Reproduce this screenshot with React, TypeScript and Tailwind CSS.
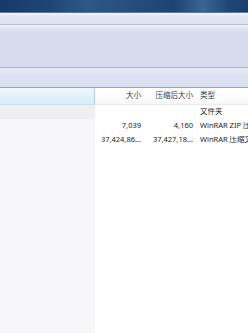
const font = "font-['Noto_Sans','Noto_Sans_CJK_SC',sans-serif]";

interface Row {
  size: string;
  packed: string;
  type: string;
  h: string;
}

const rows: Row[] = [
  { size: "", packed: "", type: "文件夹", h: "h-[14px]" },
  { size: "7,039", packed: "4,160", type: "WinRAR ZIP 压缩文件", h: "h-[14px]" },
  { size: "37,424,86...", packed: "37,427,18...", type: "WinRAR 压缩文件", h: "h-[13px]" },
];

const App: React.FC = () => {
  return (
    <div className={`w-[248px] h-[333px] overflow-hidden flex flex-col bg-white ${font} text-[7.5px] leading-none`}>
      {/* title bar */}
      <div className="h-[13px] shrink-0 bg-[linear-gradient(90deg,#173a6c_0%,#1f4576_20%,#2d5787_35%,#264c7d_55%,#1d4274_70%,#3a6596_82%,#204676_92%,#1a3d6f_100%)] border-b border-[#5a78a4]" />
      {/* menu strip */}
      <div className="h-[12px] shrink-0 bg-[linear-gradient(180deg,#f6f7fc_0%,#e2e6f5_25%,#dde1f2_100%)] border-b border-[#b9bdc9]" />
      {/* toolbar */}
      <div className="h-[43px] shrink-0 bg-[linear-gradient(180deg,#f1f3fb_0%,#dfe3f3_8%,#d6dbed_20%,#d5daec_100%)] border-b border-[#aeb6c3]" />
      {/* address strip */}
      <div className="h-[20px] shrink-0 bg-[linear-gradient(180deg,#e6e9f6_0%,#dde2f1_40%,#dce1f1_100%)] border-b border-[#9ea3ab]" />
      {/* column header */}
      <div className="h-[17px] shrink-0 flex text-[#2e3b4d]">
        <div className="w-[95px] shrink-0 bg-[linear-gradient(180deg,#eef8fd_0%,#e3f3fb_50%,#d8eef9_100%)] border-r border-[#a9d3e9] border-b border-b-[#c5e4f3]" />
        <div className="flex-1 flex bg-[linear-gradient(180deg,#ffffff_0%,#fdfdfd_60%,#f6f7f8_100%)] border-b border-[#e8eaee]">
          <div className="w-[51px] shrink-0 flex items-center justify-end pr-[5px]">大小</div>
          <div className="w-[51px] shrink-0 flex items-center justify-end pr-[4px]">压缩后大小</div>
          <div className="flex-1 flex items-center pl-[3px] whitespace-nowrap overflow-hidden">类型</div>
        </div>
      </div>
      {/* body */}
      <div className="flex-1 flex">
        <div className="w-[95px] shrink-0 flex flex-col bg-[#f7f7f9]">
          <div className="h-[14px] bg-[#efeff0]" />
        </div>
        <div className="flex-1 flex flex-col text-[#1c1c1c]">
          {rows.map((r, i) => (
            <div key={i} className={`${r.h} flex items-center`}>
              <div className="w-[51px] shrink-0 text-right pr-[5px] whitespace-nowrap">{r.size}</div>
              <div className="w-[51px] shrink-0 text-right pr-[4px] whitespace-nowrap">{r.packed}</div>
              <div className="flex-1 pl-[3px] whitespace-nowrap overflow-hidden">{r.type}</div>
            </div>
          ))}
        </div>
      </div>
    </div>
  );
};

export default App;
